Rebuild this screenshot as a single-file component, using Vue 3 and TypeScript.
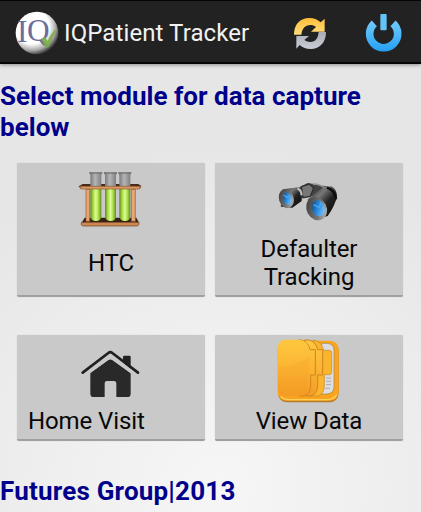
<script setup lang="ts">
import { ref } from 'vue'

interface Module {
  id: string
  title: string
  align?: string
}

const appName = 'IQPatient Tracker'
const selected = ref<string | null>(null)

const rows: Module[][] = [
  [
    { id: 'htc', title: 'HTC' },
    { id: 'defaulter', title: 'Defaulter Tracking' },
  ],
  [
    { id: 'home', title: 'Home Visit', align: 'left' },
    { id: 'data', title: 'View Data' },
  ],
]

const tubes = [60, 104, 147]

function openModule(id: string) {
  selected.value = id
}
</script>

<template>
  <div class="screen">
    <header class="action-bar">
      <svg class="logo" viewBox="0 0 132 132">
        <defs>
          <radialGradient id="ball" cx="0.38" cy="0.35" r="0.68">
            <stop offset="0.6" stop-color="#ffffff" />
            <stop offset="0.82" stop-color="#a9a9a9" />
            <stop offset="1" stop-color="#2c2c2c" />
          </radialGradient>
        </defs>
        <circle cx="66" cy="66" r="64" fill="url(#ball)" />
        <text x="6" y="93" class="logo-i">I</text>
        <text x="36" y="91" class="logo-q">Q</text>
        <path d="M78 83l12-5 8 12q12-28 29-38-13 23-26 56l-9 2z" fill="#7dae45" opacity=".9" />
      </svg>
      <h1 class="app-name">{{ appName }}</h1>
      <button class="action refresh" aria-label="Refresh">
        <svg viewBox="36 42 108 108">
          <defs>
            <linearGradient id="gold" x2="0" y2="1">
              <stop offset="0" stop-color="#ffbe3c" />
              <stop offset="1" stop-color="#ffdc7a" />
            </linearGradient>
            <linearGradient id="steel" x2="0" y2="1">
              <stop offset="0" stop-color="#a9adb6" />
              <stop offset="1" stop-color="#c9cdd5" />
            </linearGradient>
          </defs>
          <path d="M42 101C42 70 60 51 88 51c14 0 24 4 34 13l12-11v39H93l15-14c-5-4-11-6-17-6-16 0-25 11-27 29z" fill="url(#gold)" />
          <path d="M138 93c0 31-18 51-46 51-14 0-24-4-33-12l-10 11v-38h38l-14 12c5 4 11 6 18 6 16 0 23-11 25-30z" fill="url(#steel)" />
        </svg>
      </button>
      <button class="action power" aria-label="Exit">
        <svg viewBox="252 33 120 126">
          <defs>
            <linearGradient id="sky" gradientUnits="userSpaceOnUse" x1="0" y1="45" x2="0" y2="152">
              <stop offset="0" stop-color="#7cd2fb" />
              <stop offset="1" stop-color="#259ff4" />
            </linearGradient>
          </defs>
          <path d="M283 67a42 42 0 1 0 56 0" fill="none" stroke="url(#sky)" stroke-width="23" />
          <rect x="301" y="39" width="19" height="49" rx="3" fill="#64c2f6" />
        </svg>
      </button>
    </header>

    <main class="content">
      <h2 class="prompt">Select module for data capture below</h2>

      <div v-for="(row, i) in rows" :key="i" class="row" :class="{ tall: i === 0 }">
        <button
          v-for="item in row"
          :key="item.id"
          class="module"
          :class="[item.align, { selected: selected === item.id }]"
          @click="openModule(item.id)"
        >
          <!-- test tube rack -->
          <svg v-if="item.id === 'htc'" class="icon" viewBox="-11 9 270 213">
            <defs>
              <linearGradient id="glass">
                <stop offset="0" stop-color="#707073" />
                <stop offset=".45" stop-color="#b5b5b8" />
                <stop offset="1" stop-color="#77777a" />
              </linearGradient>
              <linearGradient id="fluid">
                <stop offset="0" stop-color="#638523" />
                <stop offset=".25" stop-color="#a6da42" />
                <stop offset=".5" stop-color="#dcff94" />
                <stop offset=".75" stop-color="#a5d840" />
                <stop offset="1" stop-color="#668629" />
              </linearGradient>
            </defs>
            <path d="M45 173h155l8 15H36z" fill="#352014" />
            <path d="M35 187h173v6l-4 5H39l-4-3z" fill="#cc8650" stroke="#70401f" stroke-width="2" />
            <path d="M39 72h167l9 6-4 8H33l-6-7z" fill="#49291a" />
            <path d="M49 88h11v96H49zM185 88h12v96h-12z" fill="#e6a773" stroke="#925731" stroke-width="2" />
            <g v-for="x in tubes" :key="x">
              <path :d="`M${x - 1} 37h39l-3 9v37h-33V46z`" fill="url(#glass)" />
              <path :d="`M${x - 1} 37h39v4h-39z`" fill="#727276" />
              <path :d="`M${x + 2} 84h33v85q0 14-16 14t-17-14z`" fill="url(#fluid)" />
            </g>
            <path d="M30 79h183l-4 8H35z" fill="#dc9861" stroke="#8b5430" stroke-width="2" />
          </svg>

          <!-- binoculars -->
          <svg v-else-if="item.id === 'defaulter'" class="icon" viewBox="-3 -6 270 213">
            <defs>
              <linearGradient id="barrel" x2="1" y2="1">
                <stop offset="0" stop-color="#292929" />
                <stop offset=".35" stop-color="#777777" />
                <stop offset=".58" stop-color="#222222" />
                <stop offset="1" stop-color="#080808" />
              </linearGradient>
              <linearGradient id="rim" x2="1" y2="1">
                <stop offset="0" stop-color="#333333" />
                <stop offset=".6" stop-color="#777777" />
                <stop offset="1" stop-color="#d5d0c6" />
              </linearGradient>
              <linearGradient id="lens" x2="1" y2="1">
                <stop offset="0" stop-color="#173759" />
                <stop offset=".45" stop-color="#2587dc" />
                <stop offset="1" stop-color="#9bd6ff" />
              </linearGradient>
            </defs>
            <path d="M101 68l27-14 39 7 30 6-27 38-22-13-36 7z" fill="#444444" />
            <path d="M109 65l24-8 13 12-10 25-22 4z" fill="#777777" stroke="#303030" stroke-width="4" />
            <path d="M53 73l47-6 11 10-1 31-28 20-35-3z" fill="url(#barrel)" />
            <path d="M97 71q12 3 13 20" fill="none" stroke="#bbbbbb" stroke-width="7" />
            <path d="M127 104l49-38 23-2q17 9 17 31-7 28-28 58l-28 8z" fill="url(#barrel)" />
            <path d="M186 68q24 7 27 35" fill="none" stroke="#0c0c0c" stroke-width="7" />
            <path d="M143 57q20-1 35 11" fill="none" stroke="#999999" stroke-width="4" />
            <ellipse cx="64" cy="101" rx="22" ry="29" transform="rotate(-18 64 101)" fill="url(#rim)" />
            <ellipse cx="67" cy="101" rx="13" ry="19" transform="rotate(-18 67 101)" fill="url(#lens)" />
            <ellipse cx="155" cy="131" rx="30" ry="36" transform="rotate(-27 155 131)" fill="url(#rim)" />
            <ellipse cx="160" cy="130" rx="19" ry="25" transform="rotate(-22 160 130)" fill="url(#lens)" />
            <path d="M145 119l18 9 5-18M55 90l12 8 5-8" fill="none" stroke="#49a7ef" stroke-width="4" />
          </svg>

          <!-- house -->
          <svg v-else-if="item.id === 'home'" class="icon" viewBox="-11 -15 270 213">
            <path d="M160 50q0-3 4-3h15q4 0 4 4v35l-23-19z" fill="#222222" />
            <path d="M62 98l54-38q6-3 12 0l55 38v63q0 10-10 10h-33v-41q0-7-7-7h-21q-7 0-7 7v41H72q-10 0-10-10z" fill="#292929" />
            <path d="M43 107l79-58 79 58" fill="none" stroke="#c9c9c9" stroke-width="10" />
            <path d="M39 98l77-59q6-5 12 0l77 59" fill="none" stroke="#202020" stroke-width="8" stroke-linecap="round" />
          </svg>

          <!-- folders -->
          <svg v-else class="icon" viewBox="-3 9 270 213">
            <defs>
              <linearGradient id="folder" x2="0" y2="1">
                <stop offset="0" stop-color="#ffc83f" />
                <stop offset=".55" stop-color="#fbb332" />
                <stop offset="1" stop-color="#f49b25" />
              </linearGradient>
            </defs>
            <rect x="39" y="29" width="182" height="182" rx="27" fill="#b77b2c" />
            <rect x="38" y="26" width="183" height="180" rx="26" fill="#f8a41d" />
            <path d="M48 193q7 9 22 10h118q19-1 27-15" fill="none" stroke="#ffd15b" stroke-width="4" />
            <path d="M170 34h16q21 1 21 22v109q-1 21-23 21h-23z" fill="#dcdde2" stroke="#a88344" stroke-width="2" />
            <path d="M183 138h15M183 148h15M183 158h15M181 169h14" stroke="#9195a0" stroke-width="2" />
            <path d="M145 24q25 3 31 31h17q7 0 7 7v59q0 7-7 7h-15v35q-1 23-20 29h-25z" fill="#fab52d" stroke="#c98722" stroke-width="2" />
            <path d="M119 24h12q23 5 27 29h15v76h-15v32q-1 25-20 31h-18z" fill="url(#folder)" stroke="#cc8520" stroke-width="3" />
            <path d="M99 24h9q22 5 27 29h16v76h-14v32q-1 25-20 31H99z" fill="url(#folder)" stroke="#cc8520" stroke-width="3" />
            <path d="M61 23h38q30 1 34 31v75h-5v31q-1 31-30 33H61q-22-1-22-24V47q0-23 22-24z" fill="url(#folder)" />
            <path d="M39 105q52 0 93-30v54h-4v31q-1 31-30 33H61q-22-1-22-24z" fill="#f39a20" opacity=".24" />
          </svg>
          <span class="title">{{ item.title }}</span>
        </button>
      </div>

      <footer class="footer">Futures Group|2013</footer>
    </main>
  </div>
</template>

<style>
body {
  margin: 0;
  background: #e8e8e8;
}
</style>

<style scoped>
.screen {
  width: 421px;
  height: 512px;
  overflow: hidden;
  display: flex;
  flex-direction: column;
  background: radial-gradient(circle at 52% 95%, #f6f6f6 0, #ededed 38%, #e6e6e6 65%);
  font-family: Roboto, "Liberation Sans", sans-serif;
}

.action-bar {
  display: flex;
  align-items: center;
  box-sizing: border-box;
  height: 64px;
  padding: 3px 17px 0 15px;
  background: #222222;
  border-top: 1px solid #050505;
  border-bottom: 2px solid #050505;
  box-shadow: 0 1px 4px rgba(0, 0, 0, 0.4);
}

.logo {
  width: 44px;
  height: 44px;
}

.logo-i,
.logo-q {
  font-family: "Liberation Serif", serif;
  font-size: 94px;
  fill: #6b6d9c;
}

.app-name {
  flex: 1;
  margin: 0 0 0 5px;
  color: #f2f2f2;
  font-size: 24px;
  font-weight: 400;
  line-height: 28px;
  letter-spacing: 0.1px;
  white-space: nowrap;
}

.action {
  display: flex;
  padding: 0;
  border: 0;
  background: none;
}

.refresh svg {
  width: 36px;
  height: 36px;
}

.power {
  margin-left: 36px;
}

.power svg {
  width: 40px;
  height: 42px;
}

.content {
  display: flex;
  flex-direction: column;
}

.prompt {
  margin: 17px 0 20px;
  color: #00008b;
  font-size: 26px;
  font-weight: 700;
  line-height: 31px;
  letter-spacing: 0.03px;
}

.row {
  display: grid;
  grid-template-columns: 188px 188px;
  column-gap: 10px;
  margin: 0 0 38px 17px;
}

.row:not(.tall) {
  margin-bottom: 35px;
}

.module {
  display: flex;
  flex-direction: column;
  align-items: center;
  box-sizing: border-box;
  height: 106px;
  padding: 0;
  border: 0;
  border-bottom: 2px solid #a0a0a0;
  border-radius: 2px;
  background: #c9c9c9;
  box-shadow: 0 0 1px #b5b5b5;
  color: #080808;
  font: 400 24px/28px Roboto, "Liberation Sans", sans-serif;
  letter-spacing: -0.1px;
}

.module.selected {
  background: #b5d9e8;
}

.tall .module {
  height: 134px;
}

.icon {
  flex: none;
  width: 90px;
  height: 71px;
}

.title {
  display: flex;
  align-items: center;
  justify-content: center;
  width: 130px;
  height: 28px;
  padding-top: 1px;
  text-align: center;
}

.tall .title {
  height: 56px;
}

.left .title {
  align-self: flex-start;
  justify-content: flex-start;
  margin-left: 11px;
}

.footer {
  color: #00008b;
  font-size: 26px;
  font-weight: 700;
  line-height: 31px;
  letter-spacing: 0.2px;
}
</style>
